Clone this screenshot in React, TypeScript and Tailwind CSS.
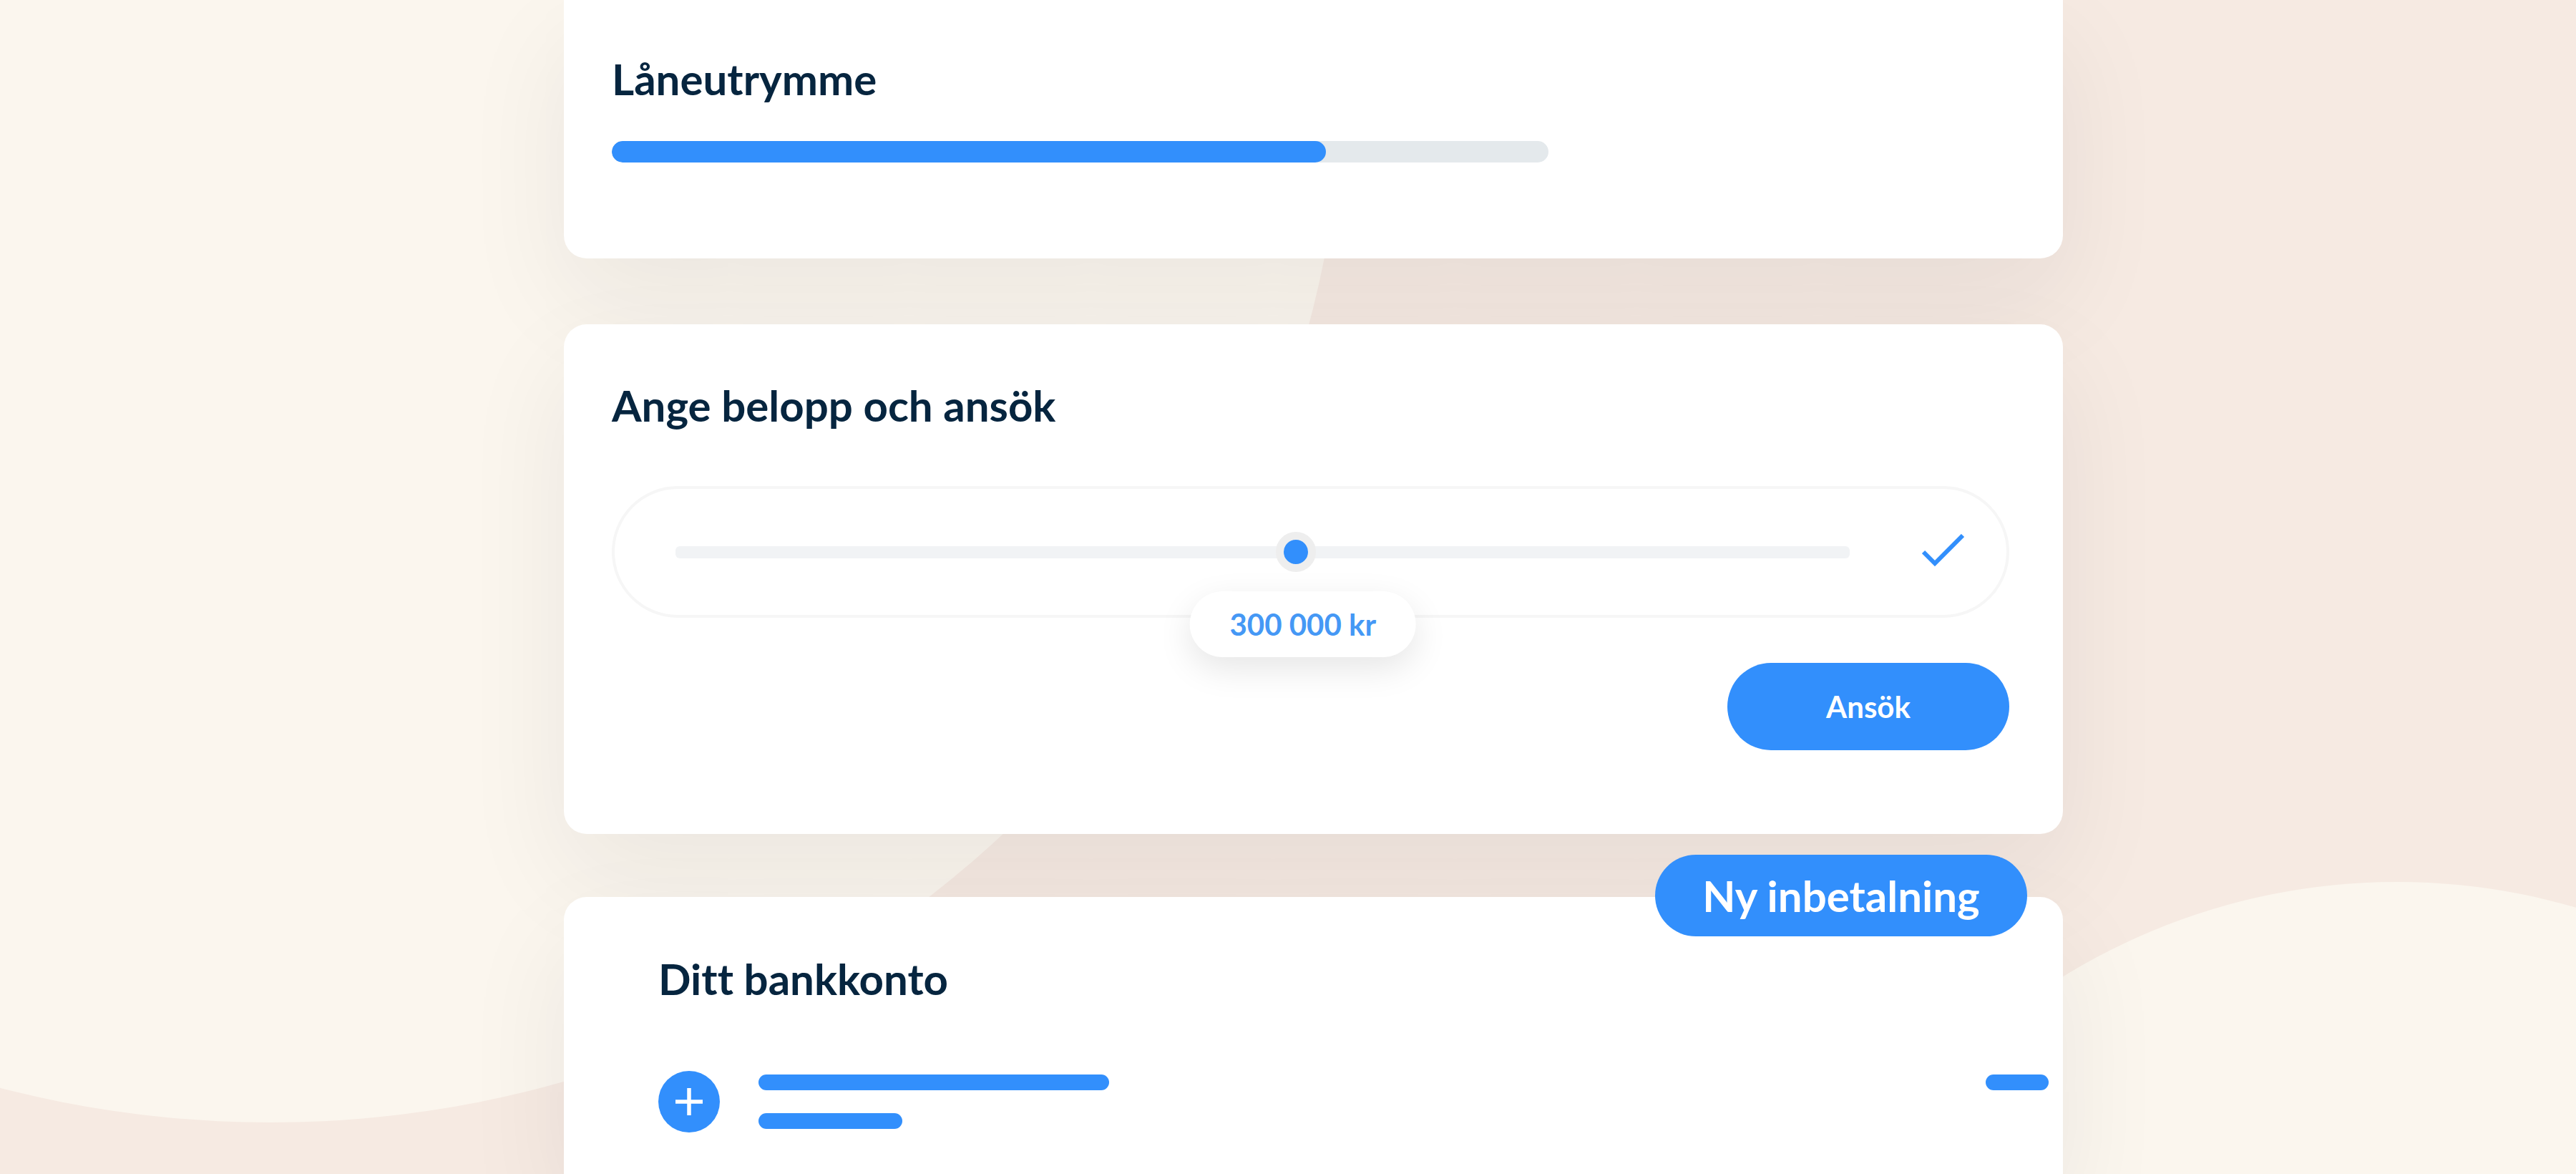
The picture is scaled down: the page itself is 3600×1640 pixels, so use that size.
import { useState } from "react";

const MIN = 30000;
const MAX = 540000;

const Background = () => (
  <svg
    className="absolute inset-0 h-full w-full"
    viewBox="0 0 3600 1640"
    preserveAspectRatio="xMidYMid slice"
    aria-hidden="true"
  >
    <circle cx="378" cy="66" r="1502" fill="#fbf6ee" />
    <circle cx="3350" cy="2122" r="890" fill="#fbf6ee" />
  </svg>
);

const LoanLimit = () => (
  <section className="rounded-b-[32px] bg-white pt-[74px] pr-[75px] pb-[134px] pl-[67px] shadow-[0_60px_150px_rgba(30,35,40,0.07)]">
    <h2 className="text-[60px] leading-[72px] font-bold">Låneutrymme</h2>
    <div
      role="progressbar"
      aria-label="Låneutrymme"
      aria-valuenow={76}
      className="mt-[51px] h-[30px] w-[67%] overflow-hidden rounded-full bg-[#e4e9ec]"
    >
      <div className="h-full rounded-full bg-[#328ffc]" style={{ width: "76.3%" }} />
    </div>
  </section>
);

const ApplyForm = () => {
  const [amount, setAmount] = useState(300000);
  const percent = ((amount - MIN) / (MAX - MIN)) * 100;
  const label = String(amount).replace(/\B(?=(\d{3})+$)/g, " ") + " kr";

  return (
    <form
      onSubmit={(e) => e.preventDefault()}
      className="mt-[92px] flex flex-col rounded-[32px] bg-white pt-[77px] pr-[75px] pb-[117px] pl-[67px] shadow-[0_60px_150px_rgba(30,35,40,0.07)]"
    >
      <h2 className="text-[60px] leading-[72px] font-bold">
        <label htmlFor="amount">Ange belopp och ansök</label>
      </h2>

      <div className="mt-[77px] flex h-[184px] items-center rounded-full border-4 border-[#f6f6f6] pr-[58px] pl-[85px]">
        <div className="relative flex flex-1 items-center">
          <input
            id="amount"
            type="range"
            min={MIN}
            max={MAX}
            step={10000}
            value={amount}
            onChange={(e) => setAmount(Number(e.target.value))}
            className="h-[17px] w-full cursor-pointer appearance-none rounded-[6px] bg-[#f1f3f5] [&::-webkit-slider-thumb]:size-14 [&::-webkit-slider-thumb]:appearance-none [&::-webkit-slider-thumb]:rounded-full [&::-webkit-slider-thumb]:border-[11px] [&::-webkit-slider-thumb]:border-solid [&::-webkit-slider-thumb]:border-[#eeeeee] [&::-webkit-slider-thumb]:bg-[#328ffc]"
          />
          <output
            htmlFor="amount"
            className="absolute top-[63px] ml-2 -translate-x-1/2 rounded-full bg-white px-14 py-[21px] text-[42px] leading-[50px] font-bold whitespace-nowrap text-[#4598f5] shadow-[0_16px_48px_rgba(0,0,0,0.1)]"
            style={{ left: `${percent}%` }}
          >
            {label}
          </output>
        </div>
        <svg className="ml-[101px] h-[50px] w-[60px] shrink-0" viewBox="0 0 60 50" fill="none" aria-hidden="true">
          <path d="M2 25L18 41L57 2" stroke="#328ffc" strokeWidth="6" />
        </svg>
      </div>

      <button
        type="submit"
        className="mt-[63px] h-[122px] w-[394px] self-end rounded-full bg-[#328ffc] text-[42px] leading-[50px] font-bold text-white"
      >
        Ansök
      </button>
    </form>
  );
};

const BankAccount = () => (
  <section className="relative mt-[88px] flex-1 rounded-t-[32px] bg-white pt-[78px] pr-5 pb-[56px] pl-[132px] shadow-[0_60px_150px_rgba(30,35,40,0.07)]">
    <button
      type="button"
      className="absolute -top-[59px] right-[50px] h-[114px] w-[520px] rounded-full bg-[#328ffc] text-[60px] leading-[72px] font-bold whitespace-nowrap text-white"
    >
      Ny inbetalning
    </button>
    <h2 className="text-[60px] leading-[72px] font-bold">Ditt bankkonto</h2>
    <div className="mt-[93px] flex items-start">
      <button
        type="button"
        aria-label="Lägg till"
        className="flex size-[86px] items-center justify-center rounded-full bg-[#328ffc]"
      >
        <svg className="size-10" viewBox="0 0 40 40" aria-hidden="true">
          <path d="M20 1V39M1 20H39" stroke="#fff" strokeWidth="5.5" />
        </svg>
      </button>
      <div className="mt-[5px] ml-[54px] flex flex-col gap-8">
        <div className="h-[22px] w-[490px] rounded-full bg-[#328ffc]" />
        <div className="h-[22px] w-[201px] rounded-full bg-[#328ffc]" />
      </div>
      <div className="mt-[5px] ml-auto h-[22px] w-[88px] rounded-full bg-[#328ffc]" />
    </div>
  </section>
);

const App = () => (
  <div className="relative min-h-screen overflow-hidden bg-[#f6eae2] font-['Lato',sans-serif] text-[#06253f] [font-variant-ligatures:none]">
    <Background />
    <div className="relative grid min-h-screen grid-cols-[788fr_2095fr_717fr]">
      <main className="col-start-2 flex min-w-0 flex-col">
        <LoanLimit />
        <ApplyForm />
        <BankAccount />
      </main>
    </div>
  </div>
);

export default App;
